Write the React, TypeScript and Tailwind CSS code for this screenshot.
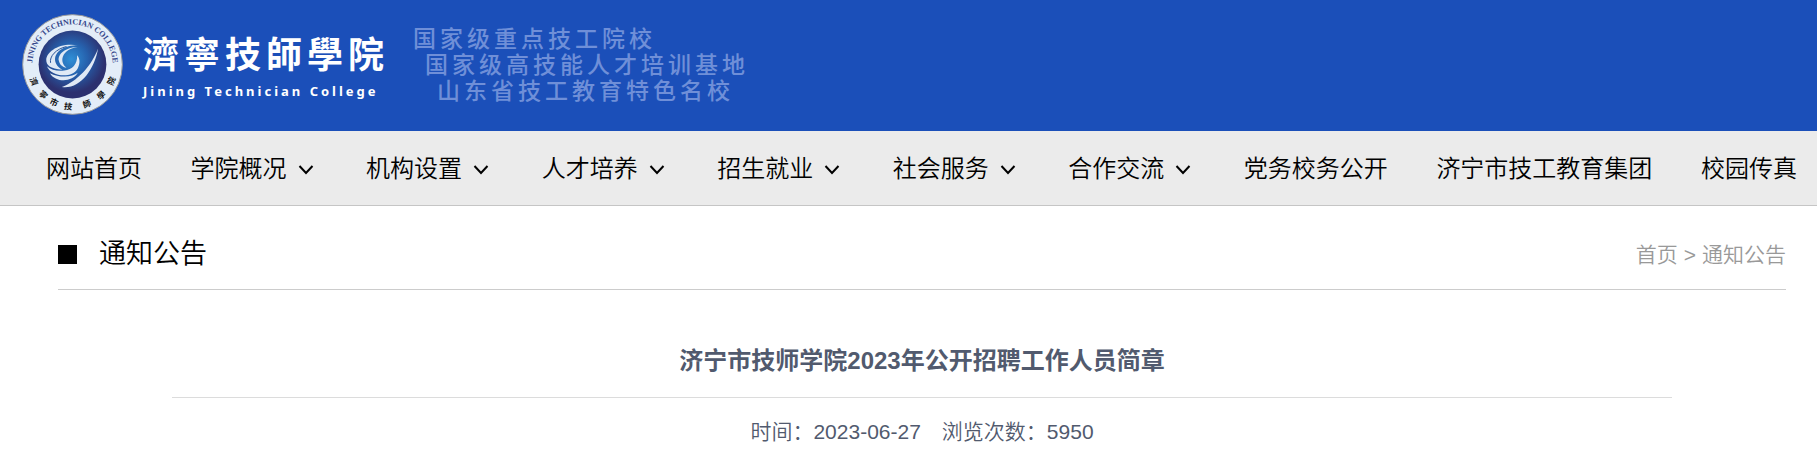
const navItems = [
  { label: '网站首页', menu: false },
  { label: '学院概况', menu: true },
  { label: '机构设置', menu: true },
  { label: '人才培养', menu: true },
  { label: '招生就业', menu: true },
  { label: '社会服务', menu: true },
  { label: '合作交流', menu: true },
  { label: '党务校务公开', menu: false },
  { label: '济宁市技工教育集团', menu: false },
  { label: '校园传真', menu: false },
];

// angle of each character on the lower rim, clockwise from the bottom
const rim = [
  { char: '濟', angle: 66 },
  { char: '寧', angle: 44 },
  { char: '市', angle: 26 },
  { char: '技', angle: 6 },
  { char: '師', angle: -20 },
  { char: '學', angle: -43 },
  { char: '院', angle: -67 },
];

function Seal() {
  return (
    <svg viewBox="38 27 304 304" className="w-[101px] h-[101px] shrink-0" aria-label="济宁市技师学院">
      <defs>
        <radialGradient id="core" cx="48%" cy="42%" r="55%">
          <stop offset="0%" stopColor="#2f8fd6" />
          <stop offset="45%" stopColor="#2660ac" />
          <stop offset="90%" stopColor="#2c306f" />
        </radialGradient>
        <path id="rim-top" d="M 71 201 A 121 121 0 1 1 309 201" />
      </defs>
      <circle cx="190" cy="179" r="150" fill="#e3edf8" stroke="#9a9a9a" strokeWidth="3" />
      <circle cx="190" cy="179" r="102" fill="url(#core)" />
      <text
        fill="#34458a"
        fontSize="24"
        fontWeight="700"
        textAnchor="middle"
        className="font-['Liberation_Serif',serif]"
      >
        <textPath href="#rim-top" startOffset="50%">
          JINING TECHNICIAN COLLEGE
        </textPath>
      </text>
      {rim.map((item) => (
        <text
          key={item.char}
          x="190"
          y="315"
          fill="#111111"
          fontSize="25"
          fontWeight="700"
          textAnchor="middle"
          transform={`rotate(${item.angle} 190 179)`}
          className="font-['Noto_Sans_CJK_TC',sans-serif]"
        >
          {item.char}
        </text>
      ))}
      <g fill="#dfe9f5">
        <path d="M206 121 C150 112 112 140 111 165 C111 182 122 192 160 195 C136 182 128 156 152 136 C168 124 188 121 206 121Z" />
        <path d="M206 126 C170 126 144 148 149 168 C152 181 160 187 172 189 C160 180 155 164 164 149 C173 135 190 128 206 126Z" />
        <path d="M113 184 C126 217 190 222 206 190 C214 174 212 160 204 151 C205 178 190 195 165 197 C142 199 126 195 113 184Z" />
        <path d="M122 205 C140 235 190 232 206 204 C190 218 150 220 122 205Z" />
        <path d="M267 131 C256 195 212 255 158 247 C190 235 240 200 267 131Z" />
      </g>
      <path d="M124 174 C120 155 140 132 172 125" fill="none" stroke="#2a5499" strokeWidth="3" />
    </svg>
  );
}

function Chevron() {
  return (
    <svg viewBox="0 0 16 16" className="w-4 h-4 ml-[11px] mr-1 mt-0.5" fill="none" stroke="#000" strokeWidth="2">
      <path d="M1.500 4 L8 11 L14.500 4" />
    </svg>
  );
}

export default function App() {
  return (
    <div className="min-h-screen bg-white text-black font-['Liberation_Sans','Noto_Sans_CJK_SC',sans-serif]">
      <header className="flex items-start h-[131px] pt-3.5 pl-[22px] bg-[#1b4fb9] text-white whitespace-nowrap">
        <Seal />
        <div className="ml-5 pt-3.5">
          <div className="flex gap-[5px] text-[36px] leading-[48px] font-bold font-['Noto_Sans_CJK_TC',sans-serif]">
            {'濟寧技師學院'.split('').map((char) => (
              <span key={char}>{char}</span>
            ))}
          </div>
          <div className="pt-0.5 text-[13px] leading-[26px] font-bold tracking-[3px] font-['Noto_Sans',sans-serif]">
            Jining Technician College
          </div>
        </div>
        <div className="ml-[29px] pt-3 text-[23px] leading-[26px] font-medium tracking-[4px] text-[#6f8fd8]">
          <p>国家级重点技工院校</p>
          <p className="pl-3">国家级高技能人才培训基地</p>
          <p className="pl-6">山东省技工教育特色名校</p>
        </div>
      </header>

      <nav className="bg-[#ebebeb] border-b border-[#c5c5c5]">
        <ul className="flex justify-between pt-0.5 pl-[46px] pr-5 text-2xl leading-[72px] font-[350] whitespace-nowrap">
          {navItems.map((item) => (
            <li key={item.label}>
              <a href="#" className="flex items-center">
                {item.label}
                {item.menu && <Chevron />}
              </a>
            </li>
          ))}
        </ul>
      </nav>

      <main className="pl-[58px] pr-[31px]">
        <div className="flex items-center justify-between h-[84px] pt-3.5 border-b border-[#cccccc]">
          <h2 className="flex items-center gap-[22px] text-[27px] font-[350]">
            <span className="w-[19px] h-[19px] bg-black" />
            通知公告
          </h2>
          <div className="flex gap-1.5 text-[21px] font-[350] text-[#999999]">
            <a href="#">首页</a>
            <span>&gt;</span>
            <a href="#">通知公告</a>
          </div>
        </div>

        <article className="max-w-[1500px] mx-auto pt-[53px] text-center text-[#515a6e]">
          <h1 className="pb-[18px] border-b border-[#dcdcdc] text-2xl leading-9 font-bold">
            济宁市技师学院2023年公开招聘工作人员简章
          </h1>
          <div className="flex justify-center gap-[21px] pt-[18px] text-[21px] leading-8 font-[350]">
            <span>时间：2023-06-27</span>
            <span>浏览次数：5950</span>
          </div>
        </article>
      </main>
    </div>
  );
}
